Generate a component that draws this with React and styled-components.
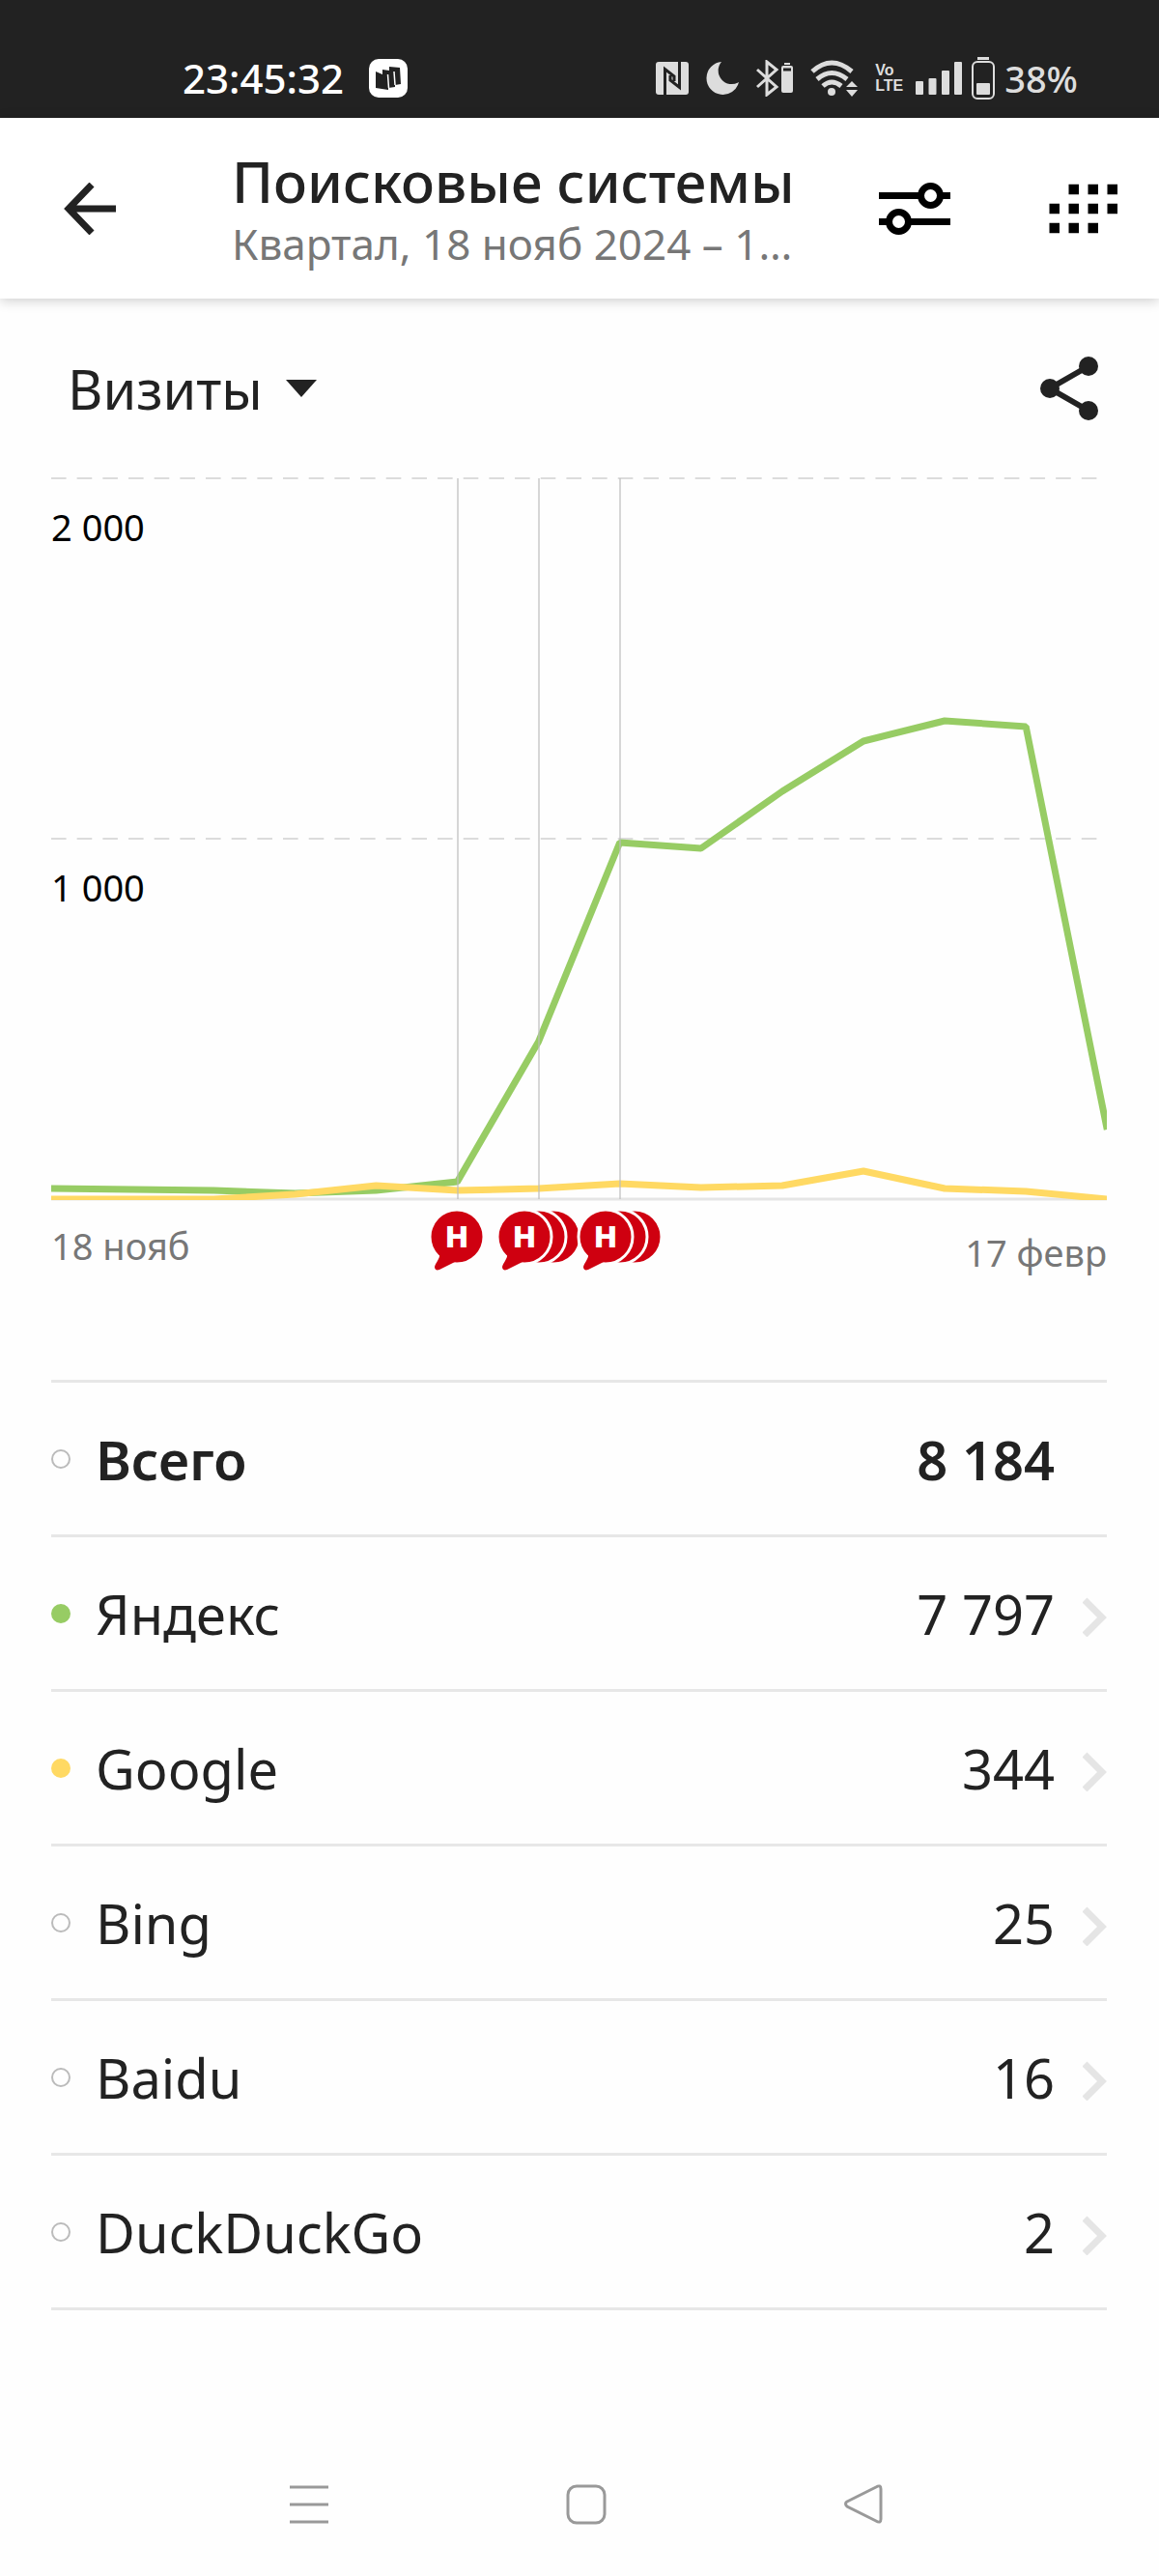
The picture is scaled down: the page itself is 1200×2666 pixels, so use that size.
import { useState } from "react";
import styled, { createGlobalStyle } from "styled-components";

const GlobalStyle = createGlobalStyle`
  * {
    box-sizing: border-box;
  }
  body {
    margin: 0;
    background: #fefefe;
    color: #222;
    font-family: "Noto Sans", "Open Sans", sans-serif;
  }
  svg {
    display: block;
    flex-shrink: 0;
  }
`

const Page = styled.div`
  display: flex;
  flex-direction: column;
  min-height: 100vh;
`

const StatusBar = styled.div`
  display: flex;
  align-items: center;
  justify-content: space-between;
  height: 122px;
  padding: 40px 84px 0 189px;
  background: #222;
  color: #ddd;
`

const StatusGroup = styled.div`
  display: flex;
  align-items: center;
  gap: ${(props) => props.$gap}px;
`

const StatusText = styled.span`
  font-size: 38px;
  line-height: 48px;
  font-weight: 500;
`

const Clock = styled(StatusText)`
  font-size: 42px;
  color: #fff;
`

const VoLte = styled.span`
  display: flex;
  flex-direction: column;
  width: 24px;
  font-family: "Liberation Sans Narrow", "Liberation Sans", sans-serif;
  font-size: 16px;
  line-height: 16px;
  font-weight: 700;
`

const Header = styled.header`
  display: flex;
  align-items: center;
  height: 187px;
  padding: 0 42px 0 66px;
  background: #fff;
  box-shadow: 0 2px 12px rgba(0, 0, 0, 0.2);
`

const IconButton = styled.button`
  display: flex;
  align-items: center;
  padding: 0;
  border: 0;
  background: none;
  color: inherit;
  cursor: pointer;
`

const Titles = styled.div`
  flex: 1;
  min-width: 0;
  margin: 0 80px 0 120px;
`

const Title = styled.h1`
  margin: 0;
  font-size: 58px;
  line-height: 72px;
  font-weight: 500;
  white-space: nowrap;
`

const Subtitle = styled.p`
  margin: 0;
  font-size: 44px;
  line-height: 56px;
  color: #777;
  white-space: nowrap;
  overflow: hidden;
  text-overflow: ellipsis;
`

const HeaderActions = styled.div`
  display: flex;
  align-items: center;
  gap: 102px;
`

const Toolbar = styled.div`
  display: flex;
  align-items: center;
  justify-content: space-between;
  height: 184px;
  padding: 2px 62px 0 70px;
`

const MetricLabel = styled.label`
  display: flex;
  align-items: center;
  gap: 24px;
`

const MetricSelect = styled.select`
  appearance: none;
  padding: 0;
  border: 0;
  background: none;
  color: inherit;
  font: inherit;
  font-size: 56px;
  line-height: 72px;
`

const ChartArea = styled.section`
  padding: 0 54px 0 53px;
`

const ChartSvg = styled.svg`
  width: 100%;
  height: auto;
`

const AxisText = styled.text`
  font-size: 38px;
  fill: ${(props) => (props.$muted ? "#777" : "#000")};
`

const MarkText = styled.text`
  font-family: Inter, "Noto Sans", sans-serif;
  font-size: 30px;
  font-weight: 900;
  fill: #fff;
`

const TableArea = styled.section`
  padding: 100px 54px 0 53px;
`

const Table = styled.table`
  width: 100%;
  border-spacing: 0;
  border-top: 3px solid #e7e7e7;
  font-size: 56px;
  line-height: 72px;
`

const Row = styled.tr`
  font-weight: ${(props) => (props.$total ? 600 : 400)};
`

const Cell = styled.td`
  height: 160px;
  padding: 0;
  border-bottom: 3px solid #e7e7e7;
  text-align: ${(props) => props.$align || "left"};
  font-weight: inherit;
`

const ChevronCell = styled(Cell)`
  width: 54px;
`

const Name = styled.div`
  display: flex;
  align-items: center;
  gap: 26px;
`

const Dot = styled.span`
  width: 20px;
  height: 20px;
  border-radius: 50%;
  border: 2px solid ${(props) => props.$color || "#bbb"};
  background: ${(props) => props.$color || "transparent"};
`

const RowLink = styled.a`
  display: flex;
  justify-content: flex-end;
  color: #e5e5e5;
`

const NavBar = styled.nav`
  display: grid;
  grid-template-columns: repeat(3, 1fr);
  justify-items: center;
  align-items: center;
  height: 148px;
  margin-top: auto;
  padding: 0 163px 0 177px;
  color: #999;
`

const GREEN = "#97cc64";
const YELLOW = "#ffd963";
const RED = "#cf0010";

const engines = [
  { name: "Всего", value: "8\u00a0184", total: true },
  { name: "Яндекс", value: "7\u00a0797", color: GREEN },
  { name: "Google", value: "344", color: YELLOW },
  { name: "Bing", value: "25" },
  { name: "Baidu", value: "16" },
  { name: "DuckDuckGo", value: "2" },
];

// weekly visits, in chart units from the top grid line
const STEP = 84.1;
const BASE = 748;
const yandexLine = [737, 738, 739, 742, 739, 730, 585, 379, 385, 326, 274, 253, 259, 676];
const googleLine = [748, 748, 748, 743, 734, 739, 737, 732, 736, 734, 719, 737, 740, 748];

const marks = [
  { x: 420, count: 1 },
  { x: 490, count: 3 },
  { x: 574, count: 3 },
];

const toPoints = (line) => line.map((y, i) => `${i * STEP},${y}`).join(" ");

const StatusIcons = () => (
  <>
    <svg width="34" height="34" viewBox="0 0 34 34">
      <rect width="34" height="34" rx="3" fill="#ddd" />
      <path d="M9.5 34V7.500L19 15V20M24.500 0V26.500L15 19V14" fill="none" stroke="#222" strokeWidth="3" />
    </svg>
    <svg width="34" height="34" viewBox="0 0 34 34">
      <path d="M16 0A17 17 0 1 0 34 21A14 14 0 0 1 16 0Z" fill="#ddd" />
    </svg>
    <svg width="38" height="38" viewBox="0 0 38 38" fill="none" stroke="#ddd">
      <path d="M1 10L21 28L11 36V2L21 10L1 28" strokeWidth="3" />
      <rect x="26" y="6" width="12" height="28" rx="2" fill="#ddd" stroke="none" />
      <path d="M29 4H35" strokeWidth="2" />
      <path d="M28 10H36" stroke="#222" strokeWidth="3" />
    </svg>
    <svg width="49" height="38" viewBox="0 0 49 38" fill="none" stroke="#ddd" strokeWidth="5">
      <path d="M2 12Q22 -6 43 12" />
      <path d="M7 20Q22 7 38 20" />
      <path d="M13 27Q22 19 32 27" />
      <circle cx="22" cy="33" r="4" fill="#ddd" stroke="none" />
      <path d="M37 28L43 22L49 28ZM37 31H49L43 38Z" fill="#ddd" stroke="none" />
    </svg>
    <VoLte>
      <span>Vo</span>
      <span>LTE</span>
    </VoLte>
  </>
);

const SignalIcon = () => (
  <svg width="48" height="34" viewBox="0 0 48 34" fill="#ddd">
    <rect x="0" y="20" width="8" height="14" rx="1" />
    <rect x="13.500" y="17" width="8" height="17" rx="1" />
    <rect x="27" y="9" width="8" height="25" rx="1" />
    <rect x="40" y="0" width="8" height="34" rx="1" />
  </svg>
);

const BatteryIcon = () => (
  <svg width="24" height="44" viewBox="0 0 24 44" fill="none" stroke="#ddd" strokeWidth="2">
    <path d="M6 1.500H18" strokeWidth="3" />
    <rect x="1" y="5" width="22" height="38" rx="5" />
    <rect x="5" y="27" width="14" height="12" rx="1" fill="#ddd" stroke="none" />
  </svg>
);

const NoteMark = ({ x, count }) => (
  <g transform={`translate(${x} 787)`}>
    {Array.from({ length: count - 1 }, (_, i) => count - 1 - i).map((n) => (
      <circle key={n} cx={n * 15} r="28" fill={RED} stroke="#fefefe" strokeWidth="3" />
    ))}
    <circle r="28" fill={RED} stroke="#fefefe" strokeWidth="3" />
    <path d="M-18 18C-17 22 -22 27 -23 31C-23 34 -21 35 -18 34L-2 26Z" fill={RED} />
    <MarkText x="0" y="11" textAnchor="middle">H</MarkText>
  </g>
);

const Chart = () => (
  <ChartSvg viewBox="0 0 1093 835" role="img" aria-label="График визитов">
    <defs>
      <clipPath id="plot">
        <rect width="1093" height="749" />
      </clipPath>
    </defs>
    <g stroke="#dcdcdc" strokeWidth="2" strokeDasharray="15.600 11.070">
      <path d="M0 2H1084" />
      <path d="M0 375H1084" />
    </g>
    <path d={`M0 ${BASE}H1093`} stroke="#e5e5e5" strokeWidth="3" />
    <g fill="none" strokeWidth="7" strokeLinejoin="bevel" clipPath="url(#plot)">
      <polyline points={toPoints(yandexLine)} stroke={GREEN} />
      <polyline points={toPoints(googleLine)} stroke={YELLOW} />
    </g>
    <path d="M421 2V748M505 2V748M589 2V748" stroke="#bbb" strokeOpacity="0.600" strokeWidth="2" />
    <AxisText x="0" y="67">2{"\u00a0"}000</AxisText>
    <AxisText x="0" y="440">1{"\u00a0"}000</AxisText>
    <AxisText x="0" y="811" $muted>18 нояб</AxisText>
    <AxisText x="1093" y="818" textAnchor="end" $muted>17 февр</AxisText>
    {marks.map((mark) => (
      <NoteMark key={mark.x} {...mark} />
    ))}
  </ChartSvg>
);

const App = () => {
  const [metric, setMetric] = useState("visits");

  return (
    <Page>
      <GlobalStyle />
      <StatusBar>
        <StatusGroup $gap={26}>
          <Clock>23:45:32</Clock>
          <svg width="40" height="40" viewBox="0 0 40 40">
            <rect width="40" height="40" rx="10" fill="#fff" />
            <path d="M7 13L14 16V11L21 12V8L32 9L33 26L27 27V29L20 30V32L7 30Z" fill="#222" />
            <path d="M19.500 16L20.500 30M26 13L27 27" stroke="#fff" strokeWidth="1.500" />
          </svg>
        </StatusGroup>
        <StatusGroup $gap={18}>
          <StatusIcons />
          <StatusGroup $gap={10}>
            <SignalIcon />
            <BatteryIcon />
            <StatusText>38%</StatusText>
          </StatusGroup>
        </StatusGroup>
      </StatusBar>

      <Header>
        <IconButton aria-label="Назад">
          <svg width="54" height="54" viewBox="0 0 54 54" fill="none" stroke="#222" strokeWidth="7">
            <path d="M54 27H6M29 2L5 27L29 52" />
          </svg>
        </IconButton>
        <Titles>
          <Title>Поисковые системы</Title>
          <Subtitle>Квартал, 18 нояб 2024 – 17 февр 2025</Subtitle>
        </Titles>
        <HeaderActions>
          <IconButton aria-label="Настройки">
            <svg width="74" height="54" viewBox="0 0 74 54" fill="#fff" stroke="#000" strokeWidth="7">
              <path d="M0 13.500H74M0 40.500H74" />
              <circle cx="53.500" cy="13.500" r="10" />
              <circle cx="20.500" cy="40.500" r="10" />
            </svg>
          </IconButton>
          <IconButton aria-label="Период">
            <svg width="72" height="52" viewBox="0 0 72 52" stroke="#000" strokeWidth="10.500">
              <path d="M20.500 6H72M0.500 26H72M0.500 46H52" strokeDasharray="10.500 9.500" />
            </svg>
          </IconButton>
        </HeaderActions>
      </Header>

      <Toolbar>
        <MetricLabel>
          <MetricSelect aria-label="Метрика" value={metric} onChange={(e) => setMetric(e.target.value)}>
            <option value="visits">Визиты</option>
          </MetricSelect>
          <svg width="32" height="18" viewBox="0 0 32 18">
            <path d="M0 0H32L16 18Z" fill="#222" />
          </svg>
        </MetricLabel>
        <IconButton aria-label="Поделиться">
          <svg width="62" height="68" viewBox="0 0 62 68" fill="#222" stroke="#222">
            <path d="M51 11L11 34L51 57" fill="none" strokeWidth="6" />
            <circle cx="11" cy="34" r="10" stroke="none" />
            <circle cx="51" cy="11" r="10" stroke="none" />
            <circle cx="51" cy="57" r="10" stroke="none" />
          </svg>
        </IconButton>
      </Toolbar>

      <ChartArea>
        <Chart />
      </ChartArea>

      <TableArea>
        <Table>
          <tbody>
            {engines.map((engine) => (
              <Row key={engine.name} $total={engine.total}>
                <Cell as="th" scope="row">
                  <Name>
                    <Dot $color={engine.color} />
                    {engine.name}
                  </Name>
                </Cell>
                <Cell $align="right">{engine.value}</Cell>
                <ChevronCell>
                  {!engine.total && (
                    <RowLink href="#" aria-label={engine.name}>
                      <svg width="25" height="48" viewBox="0 0 25 48" fill="none" stroke="currentColor" strokeWidth="7">
                        <path d="M2 10L20 28L2 46" />
                      </svg>
                    </RowLink>
                  )}
                </ChevronCell>
              </Row>
            ))}
          </tbody>
        </Table>
      </TableArea>

      <NavBar>
        <IconButton aria-label="Меню">
          <svg width="40" height="42" viewBox="0 0 40 42" stroke="currentColor" strokeWidth="3">
            <path d="M0 3H40M0 21H40M0 39H40" />
          </svg>
        </IconButton>
        <IconButton aria-label="Домой">
          <svg width="42" height="42" viewBox="0 0 42 42" fill="none" stroke="currentColor" strokeWidth="3">
            <rect x="2" y="2" width="38" height="38" rx="9" />
          </svg>
        </IconButton>
        <IconButton aria-label="Назад">
          <svg width="40" height="42" viewBox="0 0 40 42" fill="none" stroke="currentColor" strokeWidth="3">
            <path d="M3 18L33 3Q38 0 38 5V36Q38 41 33 38L3 23Q0 20 3 18Z" />
          </svg>
        </IconButton>
      </NavBar>
    </Page>
  );
}

export default App;
